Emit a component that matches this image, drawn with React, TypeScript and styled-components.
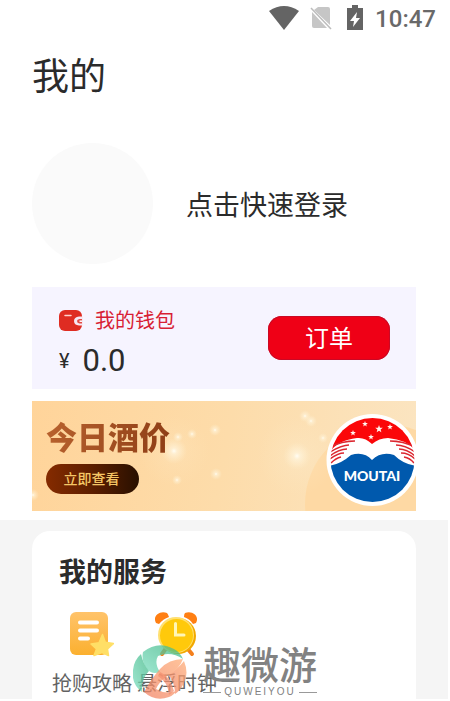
import React from "react";
import styled, { createGlobalStyle } from "styled-components";

const GlobalStyle = createGlobalStyle`
  *, *::before, *::after { box-sizing: border-box; }
  body {
    margin: 0;
    background: #ffffff;
    color: #2b2b2b;
    font-family: Roboto, "Noto Sans CJK SC", sans-serif;
  }
  h1, h2, p { margin: 0; }
  button { border: 0; padding: 0; background: none; color: inherit; font: inherit; cursor: pointer; }
`;

const Page = styled.div`
  display: flex;
  flex-direction: column;
`;

const StatusBar = styled.header`
  display: flex;
  align-items: center;
  justify-content: flex-end;
  height: 36px;
  padding-right: 14px;
  color: #696969;
`;

const StatusIcon = styled.svg<{ $gap: number }>`
  display: block;
  flex: none;
  margin-right: ${(p) => p.$gap}px;
`;

const Clock = styled.time`
  padding-top: 2px;
  font-size: 24px;
  font-weight: 500;
  line-height: 34px;
`;

const Main = styled.main`
  display: flex;
  flex-direction: column;
`;

const Account = styled.section`
  display: flex;
  flex-direction: column;
  padding: 14px 34px 0 32px;
`;

const Title = styled.h1`
  font-size: 37px;
  font-weight: 400;
  line-height: 56px;
`;

const Login = styled.button`
  display: flex;
  align-items: center;
  gap: 33px;
  margin-top: 37px;
  font-size: 27px;
  line-height: 40px;
  text-align: left;
`;

const Avatar = styled.span`
  width: 121px;
  height: 121px;
  border-radius: 50%;
  background: #fafafa;
`;

const LoginLabel = styled.span`
  padding-top: 4px;
`;

const Wallet = styled.div`
  display: flex;
  align-items: center;
  justify-content: space-between;
  margin-top: 23px;
  padding: 16px 26px 8px 27px;
  background: #f6f4ff;
`;

const WalletInfo = styled.div`
  display: flex;
  flex-direction: column;
`;

const WalletName = styled.div`
  display: flex;
  align-items: center;
  gap: 12px;
  font-size: 20px;
  line-height: 36px;
  color: #d81e35;
`;

const Balance = styled.div`
  display: flex;
  align-items: center;
  gap: 13px;
  padding-top: 2px;
  font-size: 31px;
  line-height: 40px;
`;

const Currency = styled.span`
  font-size: 20px;
`;

const OrderButton = styled.button`
  width: 122px;
  height: 44px;
  margin-bottom: 8px;
  border-radius: 14px;
  background: #ef0016;
  box-shadow: inset 0 0 0 1px #c90925;
  color: #ffffff;
  font-size: 24px;
  line-height: 46px;
`;

const Banner = styled.div`
  position: relative;
  display: flex;
  flex-direction: column;
  align-items: flex-start;
  height: 110px;
  margin-top: 12px;
  padding: 16px 14px;
  overflow: hidden;
  background: linear-gradient(100deg, #ffd49a 0%, #fddcaa 50%, #fbe5c2 100%);
`;

const BannerArt = styled.svg`
  position: absolute;
  top: 0;
  right: 0;
`;

const BannerTitle = styled.h2`
  position: relative;
  font-size: 31px;
  font-weight: 900;
  line-height: 44px;
  color: transparent;
  background: linear-gradient(100deg, #b9622e, #8d3d16);
  background-clip: text;
`;

const BannerButton = styled.button`
  position: relative;
  width: 93px;
  height: 30px;
  margin-top: 3px;
  padding-right: 2px;
  border-radius: 15px;
  background: linear-gradient(90deg, #852b00, #5c1e00 50%, #281000);
  color: #f5c766;
  font-size: 14px;
  font-weight: 500;
  line-height: 30px;
`;

const Services = styled.section`
  position: relative;
  margin: 9px 2px 0 0;
  padding: 11px 32px 0;
  background: #f5f5f5;
`;

const ServiceCard = styled.div`
  padding: 22px 20px 0;
  border-radius: 18px 18px 0 0;
  background: #ffffff;
`;

const ServiceTitle = styled.h2`
  padding-left: 7px;
  font-size: 27px;
  font-weight: 700;
  line-height: 40px;
`;

const ServiceList = styled.div`
  display: flex;
  gap: 5px;
  margin-top: 18px;
`;

const Service = styled.button`
  display: flex;
  flex-direction: column;
  align-items: center;
  color: #626262;
  font-size: 20px;
  line-height: 30px;
  white-space: nowrap;
`;

const ServiceIcon = styled.svg`
  display: block;
  margin-bottom: 12px;
`;

const Watermark = styled.div`
  position: absolute;
  left: 133px;
  bottom: 0;
  display: flex;
  align-items: center;
  gap: 16px;
  color: #828282;
  pointer-events: none;
`;

const WatermarkText = styled.div`
  display: flex;
  flex-direction: column;
`;

const WatermarkName = styled.p`
  font-size: 38px;
  font-weight: 500;
  line-height: 40px;
`;

const WatermarkLatin = styled.p`
  display: flex;
  align-items: center;
  gap: 3px;
  font-family: "Liberation Sans", sans-serif;
  font-size: 10px;
  line-height: 12px;
  letter-spacing: 2px;

  &::before, &::after {
    content: "";
    flex: 1;
    height: 1px;
    background: #999999;
  }
`;

const SPARKS = [
  [142, 50, 13], [146, 36, 5], [160, 33, 5], [183, 29, 6], [184, 73, 6],
  [145, 79, 5], [265, 55, 14], [273, 15, 6], [279, 20, 6], [291, 37, 5], [1, 94, 6],
];

const STARS = [
  [347, 28, 4], [333, 23, 3], [358, 26, 3], [321, 32, 3], [339, 36, 3],
];

function starPoints(cx: number, cy: number, r: number) {
  return Array.from({ length: 10 }, (_, i) => {
    const radius = i % 2 ? r * 0.42 : r;
    const angle = -Math.PI / 2 + (i * Math.PI) / 5;
    return `${cx + radius * Math.cos(angle)},${cy + radius * Math.sin(angle)}`;
  }).join(" ");
}

function BannerDrawing() {
  return (
    <BannerArt width="384" height="110" viewBox="0 0 384 110" aria-hidden="true">
      <defs>
        <radialGradient id="spark">
          <stop offset="0" stopColor="#fffdf4" />
          <stop offset="0.25" stopColor="#fff5dd" stopOpacity="0.65" />
          <stop offset="1" stopColor="#fff0d0" stopOpacity="0" />
        </radialGradient>
        <clipPath id="emblem"><circle cx="340.500" cy="59" r="42" /></clipPath>
      </defs>
      <circle cx="353" cy="103" r="80" fill="#fed9a4" />
      <circle cx="265" cy="55" r="40" fill="url(#spark)" opacity="0.25" />
      <circle cx="142" cy="50" r="36" fill="url(#spark)" opacity="0.2" />
      {SPARKS.map(([x, y, r]) => <circle key={`${x}-${y}`} cx={x} cy={y} r={r} fill="url(#spark)" />)}
      <circle cx="340.500" cy="59" r="46" fill="#ffffff" />
      <g clipPath="url(#emblem)">
        <path d="M298 15H384V50Q376 39 356 37Q347 37 340 43Q333 36 325 37Q306 39 298 51Z" fill="#fb0709" />
        <path d="M297 65Q309 63 319 54Q332 50 340 59Q349 50 362 54Q371 63 384 65V106H297Z" fill="#0059ad" />
        <path d="M296 47Q309 40 323 40M298 51Q310 44 317 44M298 55Q307 48 315 48M298 58Q306 52 312 52M299 62Q304 57 309 56M385 47Q372 40 358 40M383 51Q373 44 364 44M383 55Q375 48 367 48M383 58Q377 52 369 52M382 62Q378 57 372 56" fill="none" stroke="#dc2730" strokeWidth="1.500" />
      </g>
      {STARS.map(([x, y, r]) => <polygon key={x} points={starPoints(x, y, r)} fill="#fff4ed" />)}
      <text x="340" y="80" textAnchor="middle" fill="#ffffff" fontFamily="Lato, sans-serif" fontSize="14" fontWeight="900">MOUTAI</text>
    </BannerArt>
  );
}

function WalletIcon() {
  return (
    <svg width="24" height="22" viewBox="0 0 24 22" aria-hidden="true">
      <rect x="0" y="0" width="23" height="21" rx="6" fill="#df2c22" />
      <path d="M6 5.500H12" stroke="#ffd3cf" strokeWidth="1.500" strokeLinecap="round" />
      <path d="M24 6.500H20Q15 7 15 11Q15 15 20 15.500H24Z" fill="#f6e7f3" />
      <path d="M23 9H20.500Q18 9.500 18 11Q18 13 20.500 13.500H23Z" fill="#e24b46" />
      <path d="M20.500 11.200H23" stroke="#fff" strokeWidth="1.500" />
    </svg>
  );
}

function GuideIcon() {
  return (
    <ServiceIcon width="46" height="46" viewBox="0 0 46 46" aria-hidden="true">
      <defs>
        <linearGradient id="guide" x2="0" y2="1">
          <stop stopColor="#ffc36a" />
          <stop offset="1" stopColor="#fbb02f" />
        </linearGradient>
      </defs>
      <rect x="1" y="1" width="38" height="43" rx="6" fill="url(#guide)" />
      <path d="M11 11.500H28M11 19.500H28M11 27.500H19" stroke="#fff" strokeWidth="4" strokeLinecap="round" />
      <path d="M33.500 23.500L36.300 31.200L44.300 32.600L38.500 38L39.500 44.500L33 41.500L25 44.500L27.500 38L22 33L30 31.700Z" fill="#ffdf66" stroke="#ffdf66" strokeWidth="1.500" strokeLinejoin="round" />
    </ServiceIcon>
  );
}

function AlarmIcon() {
  return (
    <ServiceIcon width="46" height="46" viewBox="0 0 46 46" aria-hidden="true">
      <path d="M13 36L8 43M33 37L38 43" stroke="#f4801d" strokeWidth="4" strokeLinecap="round" />
      <path d="M2 12C-2 5 6 -1 13 2Q14 3 15 6Q9 8 5 13ZM42 12C46 5 38 -1 31 2Q30 3 30 6Q36 8 39 13Z" fill="#ff7f13" />
      <circle cx="24" cy="25" r="18" fill="#f2a900" />
      <circle cx="22" cy="24" r="18" fill="#ffe071" />
      <circle cx="22.500" cy="24.500" r="16.500" fill="#ffc90b" />
      <path d="M21.500 12.500V24H30" fill="none" stroke="#fff6b6" strokeWidth="3" strokeLinecap="round" />
    </ServiceIcon>
  );
}

function WatermarkLogo() {
  return (
    <svg width="54" height="54" viewBox="0 0 54 54" aria-hidden="true">
      <defs>
        <linearGradient id="mint" x1="1" x2="0" y2="1">
          <stop stopColor="#3db583" />
          <stop offset="1" stopColor="#7edfc2" />
        </linearGradient>
        <linearGradient id="peach" x1="1" x2="0" y2="1">
          <stop stopColor="#ffae78" />
          <stop offset="1" stopColor="#f28264" />
        </linearGradient>
      </defs>
      <g fill="url(#mint)" opacity="0.75">
        <path d="M10 7Q25 -5 41 4Q47 7 50 14Q38 6 25 11Q21 18 27 27Q19 30 14 24Q8 16 10 7Z" />
        <path d="M8 9Q10 19 16 26Q8 34 9 47Q-2 39 0 25Q1 15 8 9Z" />
      </g>
      <g fill="url(#peach)" opacity="0.75">
        <path d="M51 16Q56 28 51 38Q47 46 42 49Q42 38 35 29Q44 25 51 16Z" />
        <path d="M50 14Q36 14 27 24Q18 34 11 47Q22 57 36 52Q41 50 43 46Q33 50 23 44Q26 37 34 31Q46 25 50 14Z" />
      </g>
      <path d="M27 27Q37 31 41 46L36 50Q35 37 25 31Z" fill="#f49070" opacity="0.75" />
    </svg>
  );
}

export default function App() {
  return (
    <Page>
      <GlobalStyle />
      <StatusBar>
        <StatusIcon $gap={11} width="30" height="26" viewBox="0 0 30 26" aria-hidden="true">
          <path d="M0 6Q15 -4 30 6L15 25Z" fill="#646464" />
        </StatusIcon>
        <StatusIcon $gap={15} width="22" height="24" viewBox="0 0 22 24" aria-hidden="true">
          <path d="M8 1H18Q20 1 20 3V19L4 4ZM2 6L17 22H4Q2 22 2 20Z" fill="#c6c6c6" />
          <path d="M1 2L21 23" stroke="#bdbdbd" strokeWidth="1.500" />
        </StatusIcon>
        <StatusIcon $gap={12} width="16" height="26" viewBox="0 0 16 26" aria-hidden="true">
          <path d="M5 0H11V3H16V25H0V3H5Z" fill="#646464" />
          <path d="M10 7L3 16H7L6 22L13 13H9Z" fill="#fff" />
        </StatusIcon>
        <Clock>10:47</Clock>
      </StatusBar>
      <Main>
        <Account>
          <Title>我的</Title>
          <Login type="button"><Avatar /><LoginLabel>点击快速登录</LoginLabel></Login>
          <Wallet>
            <WalletInfo>
              <WalletName><WalletIcon />我的钱包</WalletName>
              <Balance><Currency>¥</Currency>0.0</Balance>
            </WalletInfo>
            <OrderButton type="button">订单</OrderButton>
          </Wallet>
          <Banner>
            <BannerDrawing />
            <BannerTitle>今日酒价</BannerTitle>
            <BannerButton type="button">立即查看</BannerButton>
          </Banner>
        </Account>
        <Services>
          <ServiceCard>
            <ServiceTitle>我的服务</ServiceTitle>
            <ServiceList>
              <Service type="button"><GuideIcon />抢购攻略</Service>
              <Service type="button"><AlarmIcon />悬浮时钟</Service>
            </ServiceList>
          </ServiceCard>
          <Watermark>
            <WatermarkLogo />
            <WatermarkText>
              <WatermarkName>趣微游</WatermarkName>
              <WatermarkLatin>QUWEIYOU</WatermarkLatin>
            </WatermarkText>
          </Watermark>
        </Services>
      </Main>
    </Page>
  );
}
